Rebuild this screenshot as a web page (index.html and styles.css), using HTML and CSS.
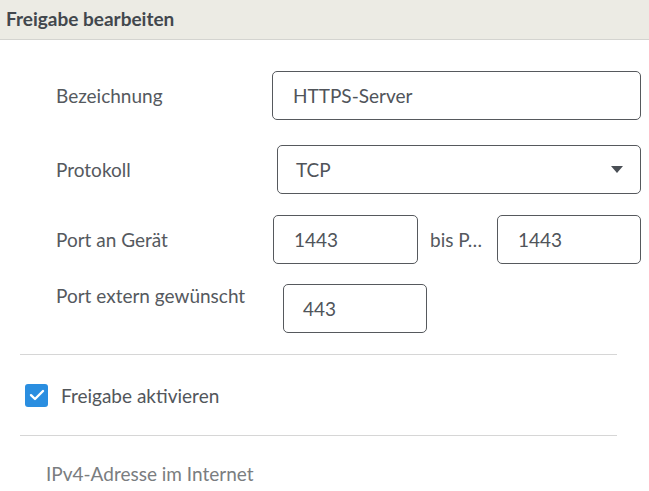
FILE: index.html
```html
<!DOCTYPE html>
<html lang="de">
<head>
<meta charset="utf-8">
<title>Freigabe bearbeiten</title>
<link rel="stylesheet" href="styles.css">
</head>
<body>
<div class="header">Freigabe bearbeiten</div>
<div class="form">
  <div class="row row-name">
    <div class="label">Bezeichnung</div>
    <div class="field field-name">HTTPS-Server</div>
  </div>
  <div class="row row-proto">
    <div class="label">Protokoll</div>
    <div class="field field-select">
      <span>TCP</span>
      <svg class="caret" width="12" height="7" viewBox="0 0 12 7"><path d="M0 0H12L6 7Z" fill="#4a4f55"/></svg>
    </div>
  </div>
  <div class="row row-port">
    <div class="label">Port an Gerät</div>
    <div class="field field-port">1443</div>
    <div class="bis">bis P…</div>
    <div class="field field-port2">1443</div>
  </div>
  <div class="row row-ext">
    <div class="label label-top">Port extern gewünscht</div>
    <div class="field field-ext">443</div>
  </div>
  <div class="divider divider-1"></div>
  <div class="check-row">
    <span class="checkbox">
      <svg width="16" height="12" viewBox="0 0 16 12"><path d="M2 6.2L6 10L14 2" fill="none" stroke="#fff" stroke-width="2.4" stroke-linecap="round" stroke-linejoin="round"/></svg>
    </span>
    <span class="check-label">Freigabe aktivieren</span>
  </div>
  <div class="divider divider-2"></div>
  <div class="ipv4">IPv4-Adresse im Internet</div>
</div>
</body>
</html>
```
FILE: styles.css
```css
* { box-sizing: border-box; }
body {
  margin: 0;
  background: #fff;
  font-family: Lato, "Open Sans", sans-serif;
  color: #505459;
}
.header {
  height: 40px;
  background: #ecebe4;
  border-bottom: 1px solid #d4d4d0;
  padding-left: 6px;
  font-weight: bold;
  font-size: 19px;
  line-height: 37px;
  color: #42474d;
}
.form {
  padding-top: 31px;
}
.row {
  display: flex;
  align-items: center;
}
.label {
  padding-left: 56px;
  font-size: 19px;
  color: #55595e;
}
.field {
  height: 49px;
  border: 1px solid #56595d;
  border-radius: 5px;
  display: flex;
  align-items: center;
  font-size: 19px;
  color: #50545a;
}
.row-name .label { width: 272px; }
.field-name { width: 369px; padding-left: 20px; }
.row-proto { margin-top: 25px; }
.row-proto .label { width: 277px; }
.field-select {
  width: 364px;
  padding-left: 18px;
  padding-right: 17px;
  justify-content: space-between;
}
.row-port { margin-top: 21px; }
.row-port .label { width: 273px; }
.field-port { width: 145px; padding-left: 20px; }
.bis {
  width: 79px;
  padding-left: 12px;
  font-size: 19px;
  color: #55595e;
}
.field-port2 { width: 144px; padding-left: 20px; }
.row-ext { margin-top: 20px; align-items: flex-start; }
.row-ext .label { width: 283px; padding-top: 0; }
.field-ext { width: 144px; padding-left: 19px; }
.divider {
  margin-left: 20px;
  width: 597px;
  height: 1px;
  background: #d6d6d6;
}
.divider-1 { margin-top: 21px; }
.check-row {
  display: flex;
  align-items: center;
  height: 80px;
  padding-left: 25px;
}
.checkbox {
  width: 23px;
  height: 23px;
  border-radius: 3px;
  background: #2a8ee0;
  display: flex;
  align-items: center;
  justify-content: center;
  margin-right: 13px;
}
.check-label {
  font-size: 19px;
  color: #52565b;
}
.ipv4 {
  padding-left: 46px;
  margin-top: 26px;
  font-size: 19px;
  color: #7a7d80;
}
```
